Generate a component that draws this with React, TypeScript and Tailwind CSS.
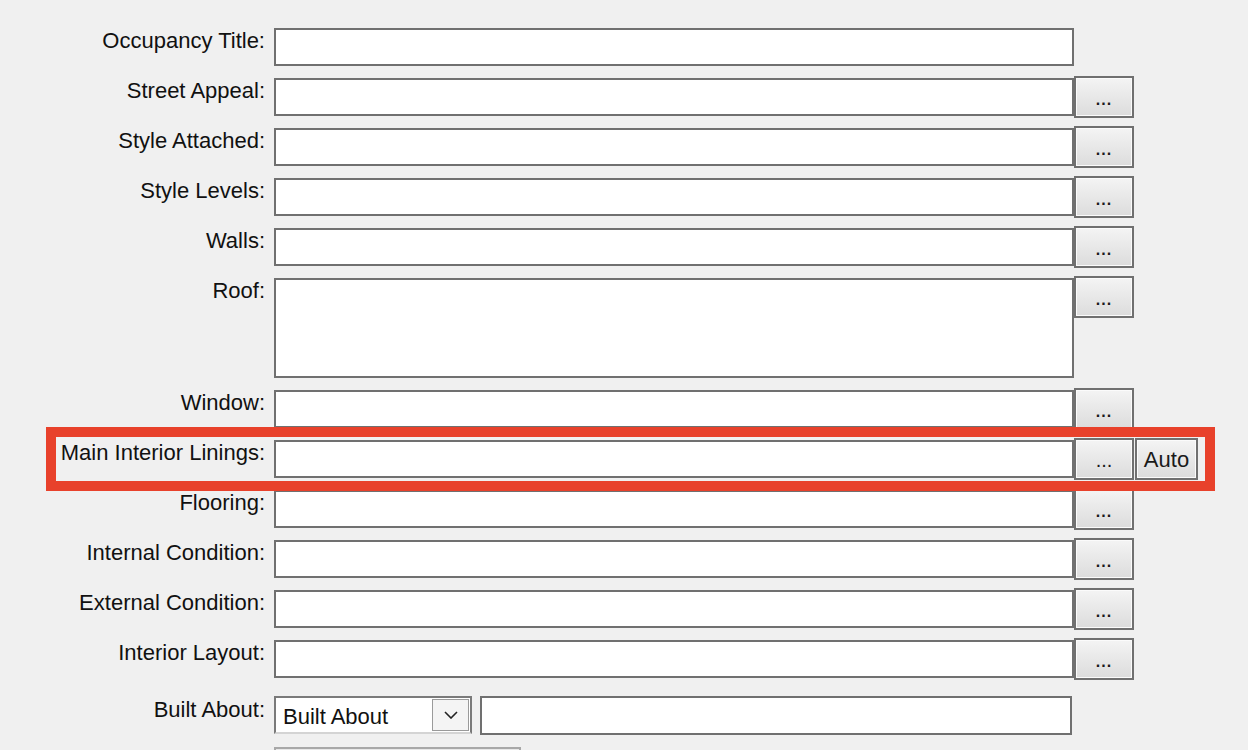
import React from "react";

const font = { fontFamily: '"Liberation Sans", Arial, sans-serif' };

function DotsButton({ label = "...", w = "w-[60px]", bold = true }: { label?: string; w?: string; bold?: boolean }) {
  return (
    <div
      className={`${w} h-[42px] shrink-0 border-2 border-[#707070] bg-linear-to-b from-[#f4f4f4] to-[#dcdcdc] shadow-[inset_0_0_0_1px_#fbfbfb] flex items-center justify-center text-[22px] leading-[22px] text-[#1a1a1a]`}
    >
      {label === "..." ? (
        <span className={bold ? "text-[16px] font-bold tracking-[1px] pt-[6px]" : "text-[20px] pt-[2px]"}>...</span>
      ) : (
        <span className="pt-[1px]">{label}</span>
      )}
    </div>
  );
}

function Row({
  label,
  button = true,
  tall = false,
  auto = false,
}: {
  label: string;
  button?: boolean;
  tall?: boolean;
  auto?: boolean;
}) {
  return (
    <div className={`flex items-start ${tall ? "h-[104px]" : "h-[42px]"}`}>
      <div className="w-[265px] shrink-0 text-right text-[22px] leading-[22px] text-[#111] pt-[4px]">{label}</div>
      <div className={`ml-[9px] mt-[2px] w-[800px] shrink-0 bg-white border-2 border-[#707070] ${tall ? "h-[100px]" : "h-[38px]"}`} />
      {button && <DotsButton bold={!auto} />}
      {auto && (
        <div className="ml-[1px]">
          <DotsButton label="Auto" w="w-[63px]" bold={false} />
        </div>
      )}
    </div>
  );
}

export default function App() {
  return (
    <div className="relative w-[1248px] h-[750px] overflow-hidden bg-[#f0f0f0]" style={font}>
      <div className="flex flex-col gap-[8px] pt-[26px]">
        <Row label="Occupancy Title:" button={false} />
        <Row label="Street Appeal:" />
        <Row label="Style Attached:" />
        <Row label="Style Levels:" />
        <Row label="Walls:" />
        <Row label="Roof:" tall />
        <Row label="Window:" />
        <Row label="Main Interior Linings:" auto />
        <Row label="Flooring:" />
        <Row label="Internal Condition:" />
        <Row label="External Condition:" />
        <Row label="Interior Layout:" />
        <div className="flex items-start h-[40px] mt-[8px]">
          <div className="w-[265px] shrink-0 text-right text-[22px] leading-[22px] text-[#111] pt-[3px]">Built About:</div>
          <div className="ml-[9px] w-[198px] h-[38px] shrink-0 bg-white border-2 border-[#7a7a7a] border-b-[#d4d4d4] flex items-center justify-between pl-[7px] pr-[1px]">
            <span className="text-[22px] leading-[22px] text-[#111] pt-[4px]">Built About</span>
            <div className="w-[37px] h-[32px] border border-[#9a9a9a] bg-[#f4f4f4] flex items-center justify-center">
              <svg width="14" height="8" viewBox="0 0 14 8">
                <path d="M1 1 L7 7 L13 1" fill="none" stroke="#222" strokeWidth="1.6" />
              </svg>
            </div>
          </div>
          <div className="ml-[8px] w-[592px] h-[39px] shrink-0 bg-white border-2 border-[#707070]" />
        </div>
        <div className="flex mt-[3px]">
          <div className="ml-[274px] w-[247px] h-[40px] border-2 border-[#a8a8a8] bg-[#e8e8e8]" />
        </div>
      </div>
      <div className="absolute left-[46px] top-[427px] w-[1169px] h-[64px] border-[10px] border-[#e8412b] pointer-events-none" />
    </div>
  );
}
